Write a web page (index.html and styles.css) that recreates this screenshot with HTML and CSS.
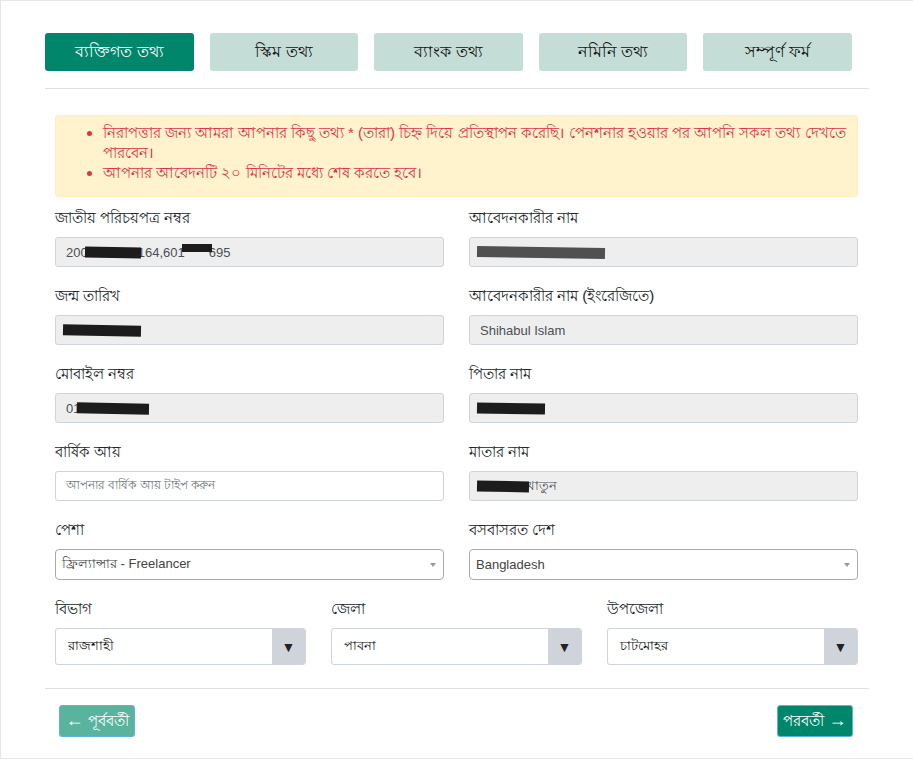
FILE: index.html
```html
<!DOCTYPE html>
<html lang="bn">
<head>
  <meta charset="UTF-8" />
  <meta name="viewport" content="width=device-width, initial-scale=1.0" />
  <title>পেনশন আবেদন</title>
  <link rel="stylesheet" href="styles.css">
</head>
<body>
  <div class="card">
    <div class="tabs">
      <button class="tab active">ব্যক্তিগত তথ্য</button>
      <button class="tab">স্কিম তথ্য</button>
      <button class="tab">ব্যাংক তথ্য</button>
      <button class="tab">নমিনি তথ্য</button>
      <button class="tab">সম্পূর্ণ ফর্ম</button>
    </div>
    <hr class="line" />

    <div class="form">
      <div class="alert">
        <ul>
          <li>নিরাপত্তার জন্য আমরা আপনার কিছু তথ্য * (তারা) চিহ্ন দিয়ে প্রতিস্থাপন করেছি। পেনশনার হওয়ার পর আপনি সকল তথ্য দেখতে পারবেন।</li>
          <li>আপনার আবেদনটি ২০ মিনিটের মধ্যে শেষ করতে হবে।</li>
        </ul>
      </div>

      <div class="grid two">
        <div class="group">
          <label>জাতীয় পরিচয়পত্র নম্বর</label>
          <div class="field readonly">200<span class="ink" style="width:56px"></span>164,601<span class="ink short" style="width:30px"></span>695</div>
        </div>
        <div class="group">
          <label>আবেদনকারীর নাম</label>
          <div class="field readonly"><span class="ink grey" style="width:128px"></span></div>
        </div>

        <div class="group">
          <label>জন্ম তারিখ</label>
          <div class="field readonly"><span class="ink" style="width:78px"></span></div>
        </div>
        <div class="group">
          <label>আবেদনকারীর নাম (ইংরেজিতে)</label>
          <div class="field readonly">Shihabul Islam</div>
        </div>

        <div class="group">
          <label>মোবাইল নম্বর</label>
          <div class="field readonly">01<span class="ink" style="width:72px"></span></div>
        </div>
        <div class="group">
          <label>পিতার নাম</label>
          <div class="field readonly"><span class="ink" style="width:68px"></span></div>
        </div>

        <div class="group">
          <label>বার্ষিক আয়</label>
          <div class="field placeholder">আপনার বার্ষিক আয় টাইপ করুন</div>
        </div>
        <div class="group">
          <label>মাতার নাম</label>
          <div class="field readonly"><span class="ink" style="width:52px"></span>খাতুন</div>
        </div>

        <div class="group">
          <label>পেশা</label>
          <div class="select2">ফ্রিল্যান্সার - Freelancer<span class="caret"></span></div>
        </div>
        <div class="group">
          <label>বসবাসরত দেশ</label>
          <div class="select2">Bangladesh<span class="caret"></span></div>
        </div>
      </div>

      <div class="grid three">
        <div class="group">
          <label>বিভাগ</label>
          <div class="dropdown"><span class="value">রাজশাহী</span><span class="arrow">&#9660;</span></div>
        </div>
        <div class="group">
          <label>জেলা</label>
          <div class="dropdown"><span class="value">পাবনা</span><span class="arrow">&#9660;</span></div>
        </div>
        <div class="group">
          <label>উপজেলা</label>
          <div class="dropdown"><span class="value">চাটমোহর</span><span class="arrow">&#9660;</span></div>
        </div>
      </div>
    </div>

    <hr class="line bottom" />

    <div class="actions">
      <button class="btn prev"><span class="arr">&larr;</span> পূর্ববর্তী</button>
      <button class="btn next">পরবর্তী <span class="arr">&rarr;</span></button>
    </div>
  </div>
</body>
</html>
```

FILE: styles.css
```css
*{box-sizing:border-box}
body{margin:0;background:#fff;font-family:"Liberation Sans","Noto Sans",sans-serif;color:#212529}
.card{width:930px;min-height:759px;border:1px solid #e6e6e6;padding:32px 0 0 44px}
.tabs{display:flex;gap:16px}
.tab{width:148.6px;height:38px;border:none;border-radius:3px;background:#c5ddd7;color:#111;font-family:inherit;font-size:16px;cursor:pointer}
.tab.active{background:#00866a;color:#fff}
.line{width:824px;margin:17px 0 0;border:none;border-top:1px solid #dee0e4}
.line.bottom{margin-top:23px}
.form{width:824px;padding:26px 11px 0 10px}
.alert{background:#fff3cd;border:1px solid #ffeeba;border-radius:3px;color:#dc3545;font-size:15px;line-height:20px;padding:7px 8px 13px 0}
.alert ul{margin:0;padding-left:47px}
.grid{display:grid;column-gap:25px}
.grid.two{grid-template-columns:1fr 1fr;margin-top:11px}
.grid.three{grid-template-columns:1fr 1fr 1fr}
.group{margin-bottom:19px}
.grid.three .group{margin-bottom:0}
.group label{display:block;font-size:15px;line-height:20px;margin-bottom:9px;color:#212529}
.field{height:30px;border:1px solid #ced4da;border-radius:3px;padding:0 10px;display:flex;align-items:center;font-size:13px;color:#495057;white-space:nowrap}
.field.readonly{background:#eeeeee}
.field.placeholder{background:#fff;color:#6c757d;font-size:12px}
.ink{display:inline-block;height:11px;background:#1c1c1c;margin:0 -3px;transform:rotate(1deg)}
.ink.short{height:8px;transform:translateY(-4px)}
.ink.grey{background:#505050}
.select2{position:relative;height:31px;border:1px solid #aaa;border-radius:4px;padding:0 6px;display:flex;align-items:center;font-size:13px;color:#444;background:#fff}
.select2 .caret{position:absolute;right:7px;top:13px;border-style:solid;border-width:4px 3px 0 3px;border-color:#999 transparent transparent transparent}
.dropdown{height:37px;border:1px solid #ced4da;border-radius:3px;display:flex;overflow:hidden;background:#fff}
.dropdown .value{flex:1;display:flex;align-items:center;padding-left:12px;font-size:13px;color:#111}
.dropdown .arrow{width:33px;background:#ced4da;display:flex;align-items:center;justify-content:center;font-size:14px;color:#222}
.actions{width:824px;display:flex;justify-content:space-between;padding:16px 16px 0 14px}
.btn{height:32px;width:76px;border:1px solid #5fb3e0;border-radius:3px;color:#fff;font-family:inherit;font-size:15px;cursor:pointer;padding:0}
.btn .arr{font-size:18px;line-height:1}
.btn.prev{background:#5ab39c}
.btn.next{background:#00866a}
```
